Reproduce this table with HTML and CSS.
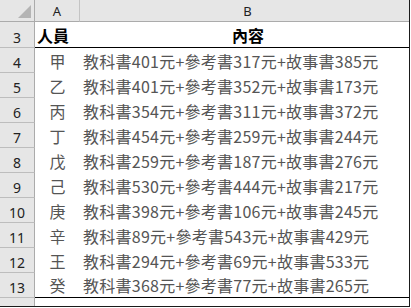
FILE: index.html
```html
<!DOCTYPE html>
<html lang="zh-Hant">
<head>
<meta charset="utf-8">
<title>Sheet</title>
<link rel="stylesheet" href="styles.css">
</head>
<body>
<div class="frame">
  <div class="sheet">
    <div class="corner"><span class="tri"></span></div>
    <div class="colhead">A</div>
    <div class="colhead">B</div>

    <div class="rowhead">3</div>
    <div class="cell head-a top">人員</div>
    <div class="cell head-b top">內容</div>

    <div class="rowhead">4</div>
    <div class="cell name">甲</div>
    <div class="cell data">教科書401元+參考書317元+故事書385元</div>

    <div class="rowhead">5</div>
    <div class="cell name">乙</div>
    <div class="cell data">教科書401元+參考書352元+故事書173元</div>

    <div class="rowhead">6</div>
    <div class="cell name">丙</div>
    <div class="cell data">教科書354元+參考書311元+故事書372元</div>

    <div class="rowhead">7</div>
    <div class="cell name">丁</div>
    <div class="cell data">教科書454元+參考書259元+故事書244元</div>

    <div class="rowhead">8</div>
    <div class="cell name">戊</div>
    <div class="cell data">教科書259元+參考書187元+故事書276元</div>

    <div class="rowhead">9</div>
    <div class="cell name">己</div>
    <div class="cell data">教科書530元+參考書444元+故事書217元</div>

    <div class="rowhead">10</div>
    <div class="cell name">庚</div>
    <div class="cell data">教科書398元+參考書106元+故事書245元</div>

    <div class="rowhead">11</div>
    <div class="cell name">辛</div>
    <div class="cell data">教科書89元+參考書543元+故事書429元</div>

    <div class="rowhead">12</div>
    <div class="cell name">王</div>
    <div class="cell data">教科書294元+參考書69元+故事書533元</div>

    <div class="rowhead">13</div>
    <div class="cell name last">癸</div>
    <div class="cell data last">教科書368元+參考書77元+故事書265元</div>

    <div class="rowhead"></div>
    <div class="cell"></div>
    <div class="cell"></div>
  </div>
</div>
</body>
</html>
```

FILE: styles.css
```css
html, body {
  margin: 0;
  padding: 0;
  background: #ffffff;
}

.frame {
  width: 410px;
  height: 307px;
  box-sizing: border-box;
  border-right: 1px solid #1a1a1a;
  border-bottom: 1px solid #1a1a1a;
  overflow: hidden;
}

.sheet {
  display: grid;
  grid-template-columns: 35px 45px 336px;
  grid-template-rows: 22px 26px repeat(10, 25px) 25px;
  width: 416px;
}

.corner {
  box-sizing: border-box;
  background: #e6e6e6;
  border-right: 1px solid #ababab;
  border-bottom: 1px solid #ababab;
  display: flex;
  justify-content: flex-end;
  align-items: flex-end;
  padding: 0 3px 3px 0;
}

.tri {
  width: 13px;
  height: 13px;
  background: #b4b4b4;
  clip-path: polygon(100% 0, 100% 100%, 0 100%);
}

.colhead {
  box-sizing: border-box;
  background: #e6e6e6;
  border-right: 1px solid #c4c4c4;
  border-bottom: 1px solid #ababab;
  display: flex;
  justify-content: center;
  align-items: center;
  font-family: "Noto Sans", "Liberation Sans", sans-serif;
  font-size: 13px;
  color: #222222;
  padding-top: 1px;
}

.rowhead {
  box-sizing: border-box;
  background: #e6e6e6;
  border-right: 1px solid #ababab;
  border-bottom: 1px solid #bdbdbd;
  display: flex;
  justify-content: center;
  align-items: center;
  font-family: "Noto Sans", "Liberation Sans", sans-serif;
  font-size: 14px;
  color: #222222;
  padding-top: 5px;
}

.cell {
  box-sizing: border-box;
  display: flex;
  align-items: center;
  white-space: nowrap;
  font-family: "Noto Sans CJK TC", "Noto Sans CJK SC", sans-serif;
  font-size: 16px;
  line-height: 1;
}

.top {
  border-bottom: 1px solid #000000;
  font-weight: bold;
  color: #000000;
}

.head-a {
  padding-left: 2px;
}

.head-b {
  justify-content: center;
}

.name {
  justify-content: center;
  color: #555555;
}

.data {
  padding-left: 3px;
  letter-spacing: 0.25px;
  color: #555555;
}

.last {
  border-bottom: 1px solid #000000;
}
```
